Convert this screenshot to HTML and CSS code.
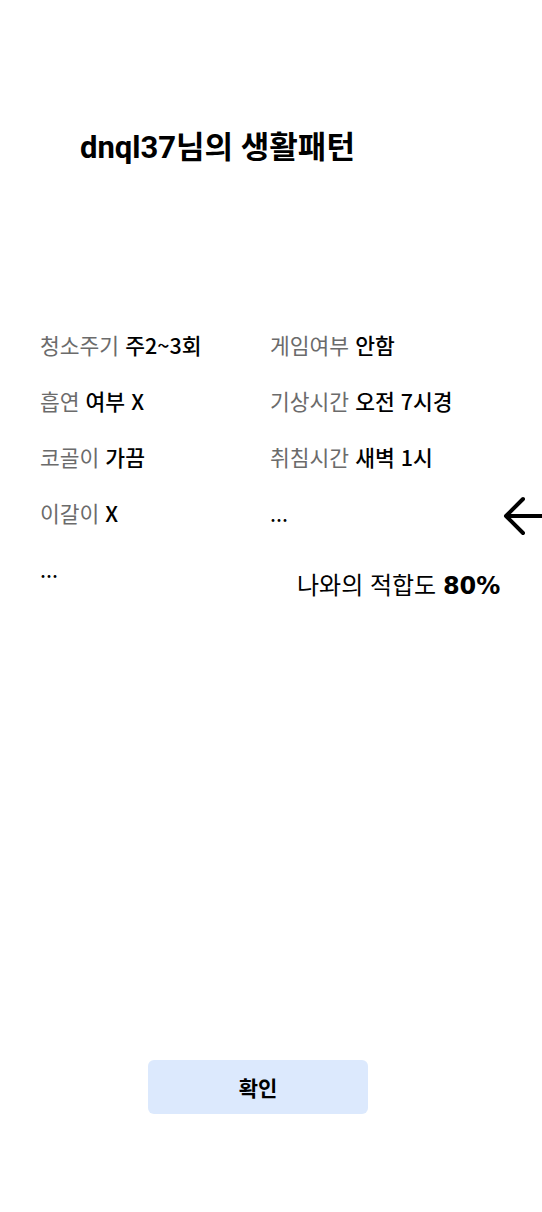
FILE: index.html
```html
<!DOCTYPE html>
<html lang="ko">
<head>
  <meta charset="UTF-8">
  <meta name="viewport" content="width=device-width, initial-scale=1.0">
  <title>생활패턴</title>
  <link rel="stylesheet" href="styles.css">
</head>
<body>

  <div class="page">
    <h1 class="title">dnql37님의 생활패턴</h1>

    <div class="info">
      <div class="item"><span class="label">청소주기</span> 주2~3회</div>
      <div class="item"><span class="label">게임여부</span> 안함</div>
      <div class="item"><span class="label">흡연</span> 여부 X</div>
      <div class="item"><span class="label">기상시간</span> 오전 7시경</div>
      <div class="item"><span class="label">코골이</span> 가끔</div>
      <div class="item"><span class="label">취침시간</span> 새벽 1시</div>
      <div class="item"><span class="label">이갈이</span> X</div>
      <div class="item more">...</div>
      <div class="item more">...</div>
      <div class="item match">나와의 적합도 <b>80%</b></div>

      <svg class="arrow" width="40" height="40" viewBox="0 0 40 40">
        <path d="M42 20 H4 M21 3 L4 20 L21 37" fill="none" stroke="#000" stroke-width="4" stroke-linecap="round" stroke-linejoin="round"/>
      </svg>
    </div>

    <div class="footer">
      <button class="confirm">확인</button>
    </div>
  </div>

</body>
</html>
```

FILE: styles.css
```css
body {
  margin: 0;
  padding: 0;
  background-color: #FFF;
  font-family: 'Noto Sans CJK KR', sans-serif;
  color: #000;
}

.page {
  height: 1212px;
  display: flex;
  flex-direction: column;
  overflow: hidden;
}

.title {
  font-family: Roboto, 'Noto Sans CJK KR', sans-serif;
  font-size: 31px;
  font-weight: 700;
  margin: 128px 0 0 80px;
  line-height: 40px;
}

.info {
  position: relative;
  display: grid;
  grid-template-columns: 230px 1fr;
  grid-auto-rows: 56px;
  margin: 157px 0 0 40px;
}

.item {
  font-size: 21.5px;
  line-height: 40px;
  font-weight: 500;
}

.item.more {
  font-weight: 400;
}

.label {
  color: #6B6B6B;
  font-weight: 400;
}

.match {
  padding-left: 27px;
  margin-top: 15px;
  font-size: 24px;
  font-weight: 400;
}

.match b {
  font-family: 'DejaVu Sans', sans-serif;
  font-weight: 700;
}

.arrow {
  position: absolute;
  right: 0;
  top: 171px;
}

.footer {
  margin-top: auto;
  margin-bottom: 98px;
  display: flex;
}

.confirm {
  width: 220px;
  height: 54px;
  margin-left: 148px;
  background-color: #DCE9FD;
  border: none;
  border-radius: 6px;
  font-family: 'Noto Sans CJK KR', sans-serif;
  font-size: 21px;
  font-weight: 700;
  color: #000;
}
```
